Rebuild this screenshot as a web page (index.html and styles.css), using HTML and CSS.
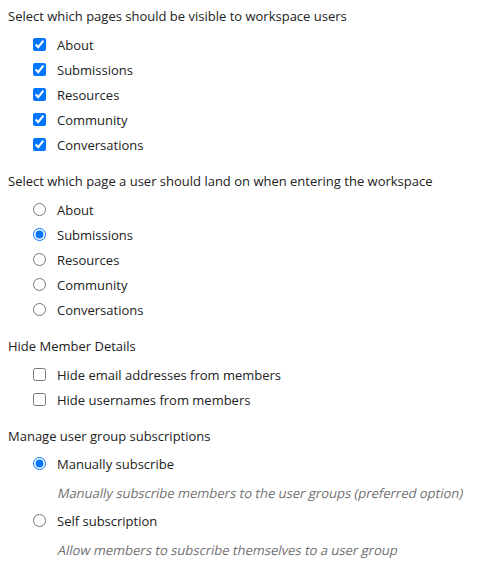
FILE: index.html
```html
<!DOCTYPE html>
<html>
<head>
<meta charset="utf-8">
<link rel="stylesheet" href="styles.css">
</head>
<body>
<div class="settings">
  <section class="section">
    <div class="heading">Select which pages should be visible to workspace users</div>
    <div class="options">
      <label class="option"><input type="checkbox" checked><span>About</span></label>
      <label class="option"><input type="checkbox" checked><span>Submissions</span></label>
      <label class="option"><input type="checkbox" checked><span>Resources</span></label>
      <label class="option"><input type="checkbox" checked><span>Community</span></label>
      <label class="option"><input type="checkbox" checked><span>Conversations</span></label>
    </div>
  </section>
  <section class="section">
    <div class="heading">Select which page a user should land on when entering the workspace</div>
    <div class="options">
      <label class="option"><input type="radio" name="land"><span>About</span></label>
      <label class="option"><input type="radio" name="land" checked><span>Submissions</span></label>
      <label class="option"><input type="radio" name="land"><span>Resources</span></label>
      <label class="option"><input type="radio" name="land"><span>Community</span></label>
      <label class="option"><input type="radio" name="land"><span>Conversations</span></label>
    </div>
  </section>
  <section class="section">
    <div class="heading">Hide Member Details</div>
    <div class="options">
      <label class="option"><input type="checkbox"><span>Hide email addresses from members</span></label>
      <label class="option"><input type="checkbox"><span>Hide usernames from members</span></label>
    </div>
  </section>
  <section class="section">
    <div class="heading">Manage user group subscriptions</div>
    <div class="options with-desc">
      <label class="option"><input type="radio" name="sub" checked><span>Manually subscribe</span></label>
      <div class="desc"><span class="slant">Manually subscribe members to the user groups (preferred option)</span></div>
      <label class="option"><input type="radio" name="sub"><span>Self subscription</span></label>
      <div class="desc"><span class="slant">Allow members to subscribe themselves to a user group</span></div>
    </div>
  </section>
</div>
</body>
</html>
```

FILE: styles.css
```css
html, body {
  background: #ffffff;
}
body {
  margin: 7px 8px 8px;
  font-family: "Open Sans", "Noto Sans", sans-serif;
  font-size: 13px;
  color: #222222;
}
.settings {
  display: flex;
  flex-direction: column;
  gap: 15px;
}
.heading {
  line-height: 18px;
}
.options {
  display: flex;
  flex-direction: column;
  margin-top: 7px;
  padding-left: 25px;
}
.options.with-desc {
  margin-top: 6px;
}
.option {
  display: flex;
  align-items: center;
  height: 25px;
  gap: 11px;
}
.option input {
  margin: 0;
  width: 13px;
  height: 13px;
  flex: none;
}
.desc {
  color: #707070;
  line-height: 18px;
  padding-left: 25px;
  margin: 8px 0 6px;
}
.slant {
  display: inline-block;
  transform: skewX(-12deg);
}
```
